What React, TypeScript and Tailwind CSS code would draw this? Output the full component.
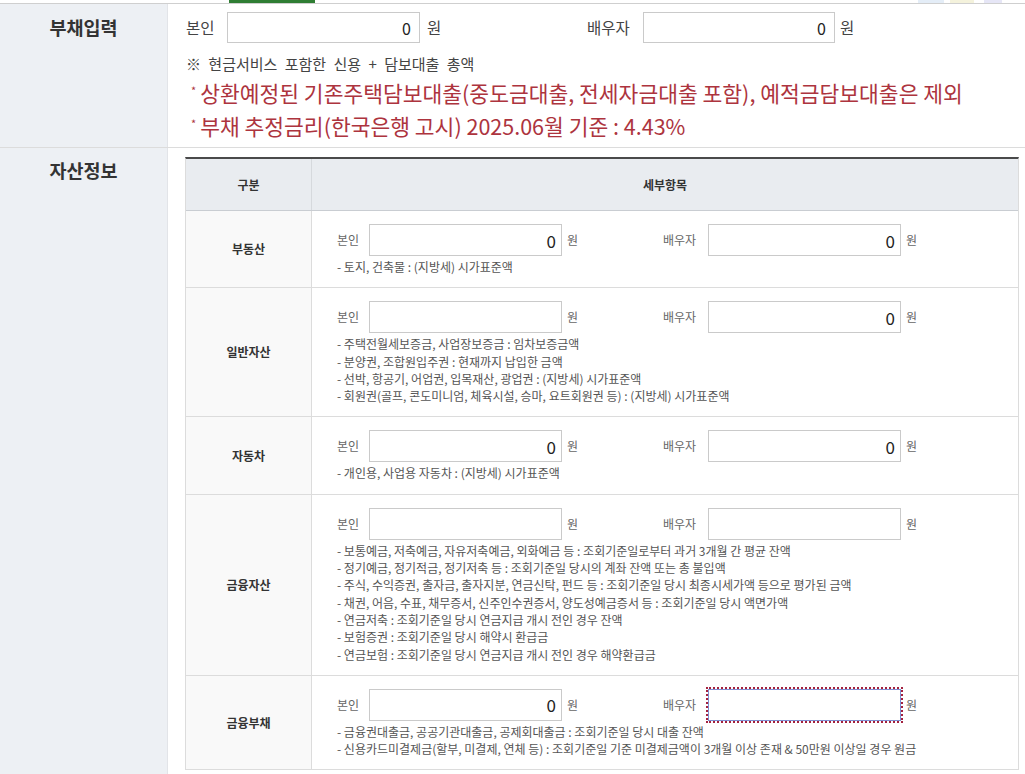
import React from "react";

type RowProps = {
  label: string;
  self: string;
  spouse: string;
  notes: string[];
  focusSpouse?: boolean;
};

function MoneyInput({ value, focus }: { value: string; focus?: boolean }) {
  return (
    <input
      defaultValue={value}
      className={
        "h-[32px] w-[193px] bg-white pr-[5px] text-right text-[17px] text-[#222] " +
        (focus
          ? "border border-[#7f8fd2] outline-2 outline-offset-0 outline-dotted outline-[#a3213f]"
          : "border border-[#cacaca] outline-none")
      }
    />
  );
}

function AssetRow({ label, self, spouse, notes, focusSpouse }: RowProps) {
  return (
    <div className="flex border-b border-[#dcdcdc]">
      <div className="flex w-[126px] shrink-0 items-center justify-center border-r border-[#dcdcdc] bg-[#f9f9f9] text-[12px] font-bold text-[#333]">
        {label}
      </div>
      <div className="flex-1 pb-[12px] pl-[25px] pt-[13px]">
        <div className="flex h-[32px] items-center">
          <div className="flex w-[326px] items-center">
            <span className="w-[32px] text-[12px] text-[#666]">본인</span>
            <MoneyInput value={self} />
            <span className="ml-[5px] text-[12px] text-[#666]">원</span>
          </div>
          <div className="flex items-center">
            <span className="w-[45px] text-[12px] text-[#666]">배우자</span>
            <MoneyInput value={spouse} focus={focusSpouse} />
            <span className="ml-[5px] text-[12px] text-[#666]">원</span>
          </div>
        </div>
        <div className="mt-[2px] text-[12px] leading-[17.3px] text-[#555]">
          {notes.map((n, i) => (
            <div key={i}>{n}</div>
          ))}
        </div>
      </div>
    </div>
  );
}

const rows: RowProps[] = [
  {
    label: "부동산",
    self: "0",
    spouse: "0",
    notes: ["- 토지, 건축물 : (지방세) 시가표준액"],
  },
  {
    label: "일반자산",
    self: "",
    spouse: "0",
    notes: [
      "- 주택전월세보증금, 사업장보증금 : 임차보증금액",
      "- 분양권, 조합원입주권 : 현재까지 납입한 금액",
      "- 선박, 항공기, 어업권, 입목재산, 광업권 : (지방세) 시가표준액",
      "- 회원권(골프, 콘도미니엄, 체육시설, 승마, 요트회원권 등) : (지방세) 시가표준액",
    ],
  },
  {
    label: "자동차",
    self: "0",
    spouse: "0",
    notes: ["- 개인용, 사업용 자동차 : (지방세) 시가표준액"],
  },
  {
    label: "금융자산",
    self: "",
    spouse: "",
    notes: [
      "- 보통예금, 저축예금, 자유저축예금, 외화예금 등 : 조회기준일로부터 과거 3개월 간 평균 잔액",
      "- 정기예금, 정기적금, 정기저축 등 : 조회기준일 당시의 계좌 잔액 또는 총 불입액",
      "- 주식, 수익증권, 출자금, 출자지분, 연금신탁, 펀드 등 : 조회기준일 당시 최종시세가액 등으로 평가된 금액",
      "- 채권, 어음, 수표, 채무증서, 신주인수권증서, 양도성예금증서 등 : 조회기준일 당시 액면가액",
      "- 연금저축 : 조회기준일 당시 연금지급 개시 전인 경우 잔액",
      "- 보험증권 : 조회기준일 당시 해약시 환급금",
      "- 연금보험 : 조회기준일 당시 연금지급 개시 전인 경우 해약환급금",
    ],
  },
  {
    label: "금융부채",
    self: "0",
    spouse: "",
    focusSpouse: true,
    notes: [
      "- 금융권대출금, 공공기관대출금, 공제회대출금 : 조회기준일 당시 대출 잔액",
      "- 신용카드미결제금(할부, 미결제, 연체 등) : 조회기준일 기준 미결제금액이 3개월 이상 존재 & 50만원 이상일 경우 원금",
    ],
  },
];

export default function App() {
  return (
    <div className="h-[774px] overflow-hidden bg-white font-['Noto_Sans_CJK_KR','Noto_Sans',sans-serif] text-[#333]">
      {/* top strip */}
      <div className="flex h-[3px]">
        <div className="ml-[229px] w-[86px] bg-[#2f7d33]" />
        <div className="ml-[603px] w-[26px] bg-[#e4edf7]" />
        <div className="ml-[6px] w-[24px] bg-[#f4f2dc]" />
        <div className="ml-[10px] w-[18px] bg-[#e6e6f6]" />
      </div>
      <div className="border-t border-[#cfcfcf]">
        {/* 부채입력 */}
        <div className="flex border-b border-[#dcdcdc]">
          <div className="w-[168px] shrink-0 border-r border-[#e2e4e8] bg-[#edf0f4] pt-[11px] text-center text-[18.5px] font-bold leading-[24px] text-[#333]">
            부채입력
          </div>
          <div className="flex-1 pb-[5px] pl-[18px] pt-[8px]">
            <div className="flex h-[31px] items-center">
              <div className="flex w-[401px] items-center">
                <span className="w-[41px] text-[15.5px] text-[#444]">본인</span>
                <input
                  defaultValue="0"
                  className="h-[31px] w-[193px] border border-[#cacaca] pr-[8px] text-right text-[16px] text-[#222] outline-none"
                />
                <span className="ml-[7px] text-[15.5px] text-[#444]">원</span>
              </div>
              <div className="flex items-center">
                <span className="w-[56px] text-[15.5px] text-[#444]">배우자</span>
                <input
                  defaultValue="0"
                  className="h-[31px] w-[192px] border border-[#cacaca] pr-[8px] text-right text-[16px] text-[#222] outline-none"
                />
                <span className="ml-[5px] text-[15.5px] text-[#444]">원</span>
              </div>
            </div>
            <div className="mt-[10px] text-[15px] leading-[22px] text-[#444] [word-spacing:4px]">
              ※ 현금서비스 포함한 신용 + 담보대출 총액
            </div>
            <div className="mt-[1px] text-[21.5px] leading-[33px] text-[#ad343e]">
              <div>
                <span className="relative top-[-7px] ml-[5px] mr-[4px] text-[11px] leading-none">*</span>
                상환예정된 기존주택담보대출(중도금대출, 전세자금대출 포함), 예적금담보대출은 제외
              </div>
              <div>
                <span className="relative top-[-7px] ml-[5px] mr-[4px] text-[11px] leading-none">*</span>
                부채 추정금리(한국은행 고시) 2025.06월 기준 : 4.43%
              </div>
            </div>
          </div>
        </div>

        {/* 자산정보 */}
        <div className="flex">
          <div className="w-[168px] shrink-0 border-r border-[#e2e4e8] bg-[#edf0f4] pt-[10px] text-center text-[18.5px] font-bold leading-[24px] text-[#333]">
            자산정보
          </div>
          <div className="flex-1 pb-[20px] pl-[17px] pr-[6px] pt-[9px]">
            <div className="border-x border-t-2 border-x-[#dcdcdc] border-t-[#4a4a4a]">
              <div className="flex h-[52px] border-b border-[#c9cdd2] bg-[#e9ecf0] text-[12px] font-bold text-[#333]">
                <div className="flex w-[126px] shrink-0 items-center justify-center border-r border-[#d6d9dd]">
                  구분
                </div>
                <div className="flex flex-1 items-center justify-center">세부항목</div>
              </div>
              {rows.map((r) => (
                <AssetRow key={r.label} {...r} />
              ))}
            </div>
          </div>
        </div>
      </div>
    </div>
  );
}
